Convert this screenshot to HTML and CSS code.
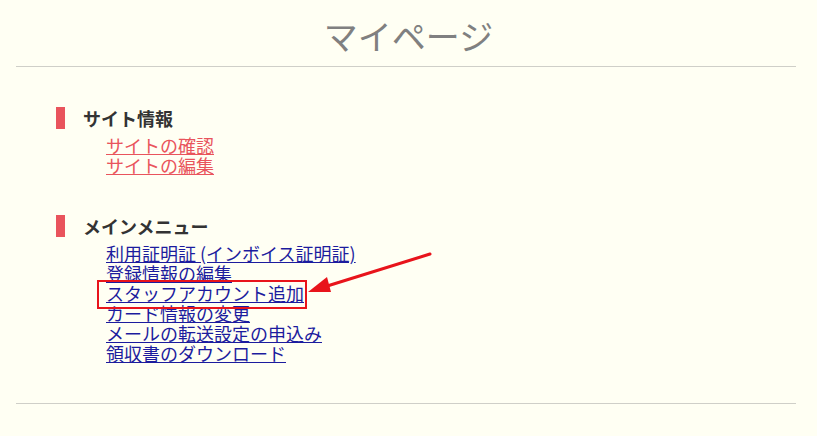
FILE: index.html
```html
<!DOCTYPE html>
<html lang="ja">
<head>
    <meta charset="UTF-8">
    <meta name="viewport" content="width=device-width, initial-scale=1.0">
    <title>マイページ</title>
    <link rel="stylesheet" href="styles.css">
</head>
<body>
    <div class="page">
        <h1 class="page-title">マイページ</h1>
        <hr class="rule">

        <div class="section">
            <h2 class="section-title">サイト情報</h2>
            <ul class="menu site-menu">
                <li><a href="#">サイトの確認</a></li>
                <li><a href="#">サイトの編集</a></li>
            </ul>
        </div>

        <div class="section">
            <h2 class="section-title">メインメニュー</h2>
            <ul class="menu main-menu">
                <li><a href="#">利用証明証 (インボイス証明証)</a></li>
                <li><a href="#">登録情報の編集</a></li>
                <li class="marked"><a href="#">スタッフアカウント追加</a></li>
                <li><a href="#">カード情報の変更</a></li>
                <li><a href="#">メールの転送設定の申込み</a></li>
                <li><a href="#">領収書のダウンロード</a></li>
            </ul>
        </div>

        <hr class="rule">

        <!-- annotation arrow pointing at the marked link -->
        <svg class="arrow" width="140" height="60" viewBox="0 0 140 60">
            <line x1="130" y1="6" x2="24" y2="39" stroke="#e8141b" stroke-width="3" stroke-linecap="round"/>
            <polygon points="8,44 27,29 31,44" fill="#e8141b"/>
        </svg>
    </div>
</body>
</html>
```

FILE: styles.css
```css
body {
    margin: 0;
    padding: 0;
    background-color: #fffff3;
    font-family: "Noto Sans CJK JP", "Noto Sans", sans-serif;
}
.page {
    position: relative;
    padding-top: 12px;
}
.page-title {
    margin: 0;
    font-size: 34px;
    font-weight: normal;
    line-height: 48px;
    text-align: center;
    color: #808080;
}
.rule {
    width: 780px;
    margin: 6px 0 0 16px;
    border: none;
    border-top: 1px solid #cfcfc8;
    height: 0;
}
.section {
    padding: 40px 0 0 56px;
}
.section + .rule {
    margin-top: 40px;
}
.section-title {
    margin: 0 0 6px 0;
    padding-left: 18px;
    border-left: 9px solid #e9545c;
    font-size: 18px;
    line-height: 22px;
    font-weight: bold;
    color: #333333;
}
.menu {
    list-style: none;
    margin: 0;
    padding: 0 0 0 50px;
}
.menu li {
    font-size: 18px;
    line-height: 20px;
}
.site-menu a {
    color: #e9545c;
}
.main-menu a {
    color: #1c1c9e;
}
.marked {
    position: relative;
}
.marked::after {
    content: "";
    position: absolute;
    left: -9px;
    top: -3px;
    width: 206px;
    height: 25px;
    border: 2px solid #e8141b;
}
.arrow {
    position: absolute;
    left: 300px;
    top: 248px;
}
```
